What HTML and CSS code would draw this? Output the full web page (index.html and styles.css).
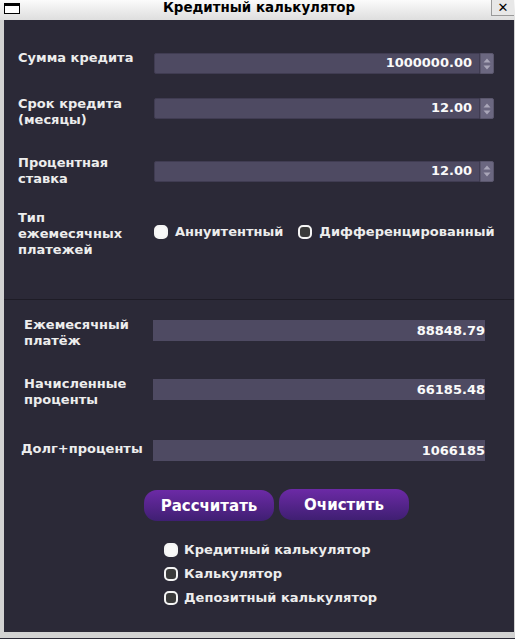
FILE: index.html
```html
<!DOCTYPE html>
<html lang="ru">
<head>
<meta charset="utf-8">
<title>Кредитный калькулятор</title>
<link rel="stylesheet" href="styles.css">
</head>
<body>
<div class="window">
  <div class="titlebar">
    <span class="win-icon"></span>
    <span class="title">Кредитный калькулятор</span>
    <span class="close">✕</span>
  </div>
  <div class="frame">
    <div class="content">
      <section class="form">
        <div class="row r1">
          <div class="label">Сумма кредита</div>
          <div class="spin f1"><div class="spin-field">1000000.00</div><div class="spin-btns"><svg width="10" height="16" viewBox="0 0 10 16"><path d="M1.5 6.5 L5 2.5 L8.5 6.5Z" fill="#a9a6b8"/><path d="M1.5 9.5 L5 13.5 L8.5 9.5Z" fill="#a9a6b8"/></svg></div></div>
        </div>
        <div class="row r2">
          <div class="label">Срок кредита<br>(месяцы)</div>
          <div class="spin f2"><div class="spin-field">12.00</div><div class="spin-btns"><svg width="10" height="16" viewBox="0 0 10 16"><path d="M1.5 6.5 L5 2.5 L8.5 6.5Z" fill="#a9a6b8"/><path d="M1.5 9.5 L5 13.5 L8.5 9.5Z" fill="#a9a6b8"/></svg></div></div>
        </div>
        <div class="row r3">
          <div class="label">Процентная<br>ставка</div>
          <div class="spin f3"><div class="spin-field">12.00</div><div class="spin-btns"><svg width="10" height="16" viewBox="0 0 10 16"><path d="M1.5 6.5 L5 2.5 L8.5 6.5Z" fill="#a9a6b8"/><path d="M1.5 9.5 L5 13.5 L8.5 9.5Z" fill="#a9a6b8"/></svg></div></div>
        </div>
        <div class="row r4">
          <div class="label">Тип<br>ежемесячных<br>платежей</div>
          <div class="choices">
            <label class="choice"><span class="radio checked"></span>Аннуитентный</label>
            <label class="choice"><span class="radio"></span>Дифференцированный</label>
          </div>
        </div>
      </section>
      <div class="sep"></div>
      <section class="results">
        <div class="row o1">
          <div class="label">Ежемесячный<br>платёж</div>
          <div class="out">88848.79</div>
        </div>
        <div class="row o2">
          <div class="label">Начисленные<br>проценты</div>
          <div class="out">66185.48</div>
        </div>
        <div class="row o3">
          <div class="label">Долг+проценты</div>
          <div class="out">1066185</div>
        </div>
      </section>
      <div class="buttons">
        <button class="btn">Рассчитать</button>
        <button class="btn btn-up">Очистить</button>
      </div>
      <div class="modes">
        <label class="choice"><span class="radio checked"></span>Кредитный калькулятор</label>
        <label class="choice"><span class="radio"></span>Калькулятор</label>
        <label class="choice"><span class="radio"></span>Депозитный калькулятор</label>
      </div>
    </div>
  </div>
</div>
</body>
</html>
```
FILE: styles.css
```css
* { box-sizing: border-box; }
html, body { margin: 0; padding: 0; }
body {
  width: 515px;
  height: 639px;
  overflow: hidden;
  font-family: "DejaVu Sans", sans-serif;
  font-weight: bold;
  font-size: 13px;
  line-height: 16px;
  background: #d2d2d2;
}
.window { width: 515px; height: 639px; display: flex; flex-direction: column; }
.titlebar {
  height: 20px;
  flex: none;
  display: flex;
  align-items: center;
  justify-content: center;
  position: relative;
  background: linear-gradient(#fbfbfb, #dedede);
  color: #000;
}
.title { font-size: 13.4px; line-height: 16px; margin-top: -5px; padding-left: 3px; }
.win-icon {
  position: absolute;
  left: 4px; top: 3px;
  width: 16px; height: 11px;
  background: #fff;
  border: 1px solid #000;
  border-top-width: 3px;
}
.close {
  position: absolute;
  right: 1px; top: 0;
  width: 23px; height: 16px;
  background: #e8e8e8;
  border-left: 1px solid #9a9a9a;
  border-bottom: 1px solid #9a9a9a;
  display: flex; align-items: center; justify-content: center;
  font-size: 13px;
  line-height: 13px;
}
.frame {
  flex: 1;
  background: #d2d2d2;
  padding: 0 1px 6px 4px;
  border-bottom: 1px solid #2b2937;
  display: flex;
}
.content {
  flex: 1;
  background: #2b2937;
  color: #ededed;
  display: flex;
  flex-direction: column;
}
.row { display: flex; align-items: flex-start; }
.label { white-space: nowrap; }
.form { padding: 30px 0 0 14px; }
.form .label { width: 136px; }
.r2 { margin-top: 22px; }
.r3 { margin-top: 27px; align-items: center; }
.r4 { margin-top: 23px; align-items: center; }
.f1 { margin-top: 3px; }
.f2 { margin-top: 2px; }
.spin { display: flex; width: 340px; height: 21px; }
.spin-field {
  flex: 1;
  background: #4e4a62;
  border: 1px solid #403c52;
  border-radius: 2px 0 0 2px;
  text-align: right;
  padding-right: 7px;
  line-height: 18px;
  color: #fafafa;
}
.spin-btns {
  width: 14px;
  background: #6b6780;
  border: 1px solid #5a566c;
  border-radius: 0 2px 2px 0;
  display: flex; align-items: center; justify-content: center;
}
.choices { display: flex; align-items: center; gap: 15px; margin-top: -4px; }
.choice { display: flex; align-items: center; gap: 7px; white-space: nowrap; }
.radio {
  width: 14px; height: 14px;
  border-radius: 5px;
  border: 2px solid #f4f4f4;
  background: #3a3a3a;
  flex: none;
}
.radio.checked { background: #f8f8f8; }
.sep { height: 1px; background: #1e1c26; margin-top: 41px; }
.results { padding: 0 0 0 20px; }
.results .label { width: 129px; }
.o1 { margin-top: 17px; }
.o2 { margin-top: 27px; }
.o3 { margin-top: 32px; padding-left: 0; margin-left: -3px; }
.o3 .label { width: 132px; margin-top: 1px; }
.o1 .out, .o2 .out { margin-top: 3px; }
.out {
  width: 332px;
  height: 21px;
  background: #4e4a62;
  text-align: right;
  line-height: 21px;
  color: #fafafa;
}
.buttons { display: flex; gap: 5px; padding-left: 140px; margin-top: 29px; align-items: flex-start; }
.btn {
  width: 130px;
  height: 31px;
  border: none;
  border-radius: 13px;
  background: linear-gradient(#6c2aa6, #3f1f72);
  color: #fff;
  font-family: "DejaVu Sans", sans-serif;
  font-weight: bold;
  font-size: 15px;
  padding: 0;
}
.btn-up { margin-top: -1px; }
.modes { display: flex; flex-direction: column; padding-left: 160px; margin-top: 17px; }
.modes .choice { height: 24px; gap: 6px; }
```
